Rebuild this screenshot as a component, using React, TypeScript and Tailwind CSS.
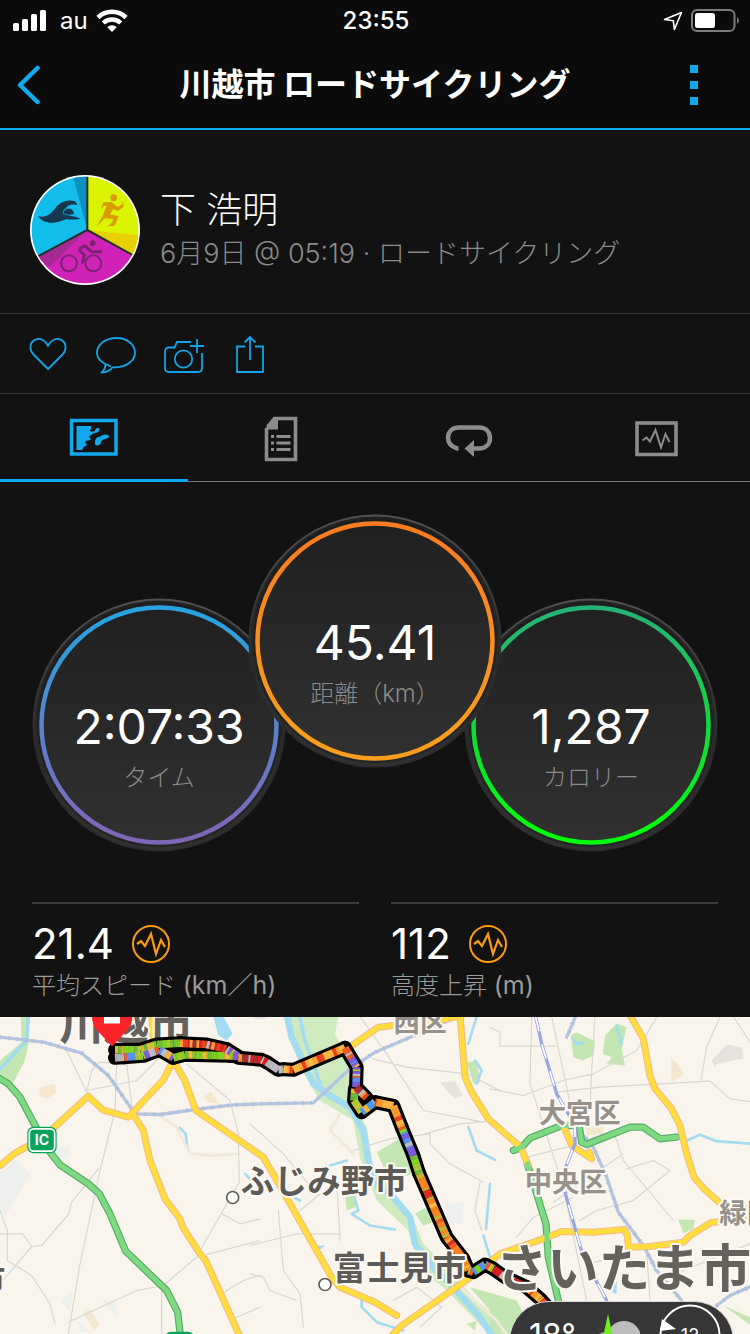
import type { ReactNode } from "react";

const pulse = "M2 12 L6 9 L10 14 L16 2 L21 22 L26 8 L30 15";

function StatusBar() {
  return (
    <div className="flex h-[41px] items-center justify-between pr-[10px] pl-3 text-white">
      <div className="flex flex-1 items-center">
        <svg width="34" height="22" viewBox="0 0 34 22" fill="#fff" aria-hidden="true">
          <rect x="1" y="13" width="6" height="8" rx="1.5" />
          <rect x="10" y="9" width="6" height="12" rx="1.5" />
          <rect x="19" y="4" width="6" height="17" rx="1.5" />
          <rect x="28" y="0" width="6" height="21" rx="1.5" />
        </svg>
        <span className="ml-[14px] text-2xl leading-8">au</span>
        <svg className="ml-2" width="32" height="24" viewBox="0 0 32 24" fill="none" stroke="#fff" aria-hidden="true">
          <path d="M2 8.5 A20 20 0 0 1 30 8.5" strokeWidth="4.6" />
          <path d="M7.3 14 A12.5 12.5 0 0 1 24.7 14" strokeWidth="4.4" />
          <path d="M16 23 L11.3 18.3 A6.6 6.6 0 0 1 20.7 18.3 Z" fill="#fff" stroke="none" />
        </svg>
      </div>
      <span className="text-2xl leading-8 font-medium">23:55</span>
      <div className="flex flex-1 items-center justify-end gap-2">
        <svg width="20" height="20" viewBox="0 0 20 20" fill="none" stroke="#fff" strokeWidth="1.6" strokeLinejoin="round" aria-hidden="true">
          <path d="M18.5 1.5 L1.5 8.5 L10.3 9.7 L11.4 18.5 Z" />
        </svg>
        <svg width="49" height="24" viewBox="0 0 49 24" aria-hidden="true">
          <rect x="1" y="1" width="42.5" height="21" rx="5" fill="none" stroke="#7c7c7c" strokeWidth="2" />
          <rect x="4" y="4" width="20" height="15" rx="2.5" fill="#fff" />
          <path d="M46 8 Q50 11.500 46 15 Z" fill="#7c7c7c" />
        </svg>
      </div>
    </div>
  );
}

function TitleBar() {
  return (
    <div className="flex h-[89px] items-center justify-between border-b-2 border-[#11a9ed] px-4">
      <button type="button" aria-label="戻る" className="flex w-16">
        <svg width="26" height="40" viewBox="0 0 26 40" fill="none" stroke="#11a9ed" strokeWidth="4.500" strokeLinecap="round" strokeLinejoin="round">
          <path d="M21.500 3 L4 20 L21.500 37" />
        </svg>
      </button>
      <h1 className="text-[32px] leading-10 font-bold text-white">川越市 ロードサイクリング</h1>
      <button type="button" aria-label="メニュー" className="flex w-16 justify-center">
        <span className="flex flex-col gap-2 pr-4">
          <span className="size-2 bg-[#11a9ed]" />
          <span className="size-2 bg-[#11a9ed]" />
          <span className="size-2 bg-[#11a9ed]" />
        </span>
      </button>
    </div>
  );
}

function Avatar() {
  return (
    <svg className="shrink-0" width="110" height="110" viewBox="0 0 330 330" aria-hidden="true">
      <defs>
        <clipPath id="disc">
          <circle cx="165" cy="165" r="160" />
        </clipPath>
      </defs>
      <circle cx="165" cy="165" r="165" fill="#fff" />
      <g clipPath="url(#disc)">
        <path d="M172 165 V0 H0 V255 Z" fill="#12bdec" />
        <path d="M172 165 V0 H128 Z" fill="#0f8fc0" />
        <path d="M172 165 V0 H330 V255 Z" fill="#d9f300" />
        <path d="M172 165 L330 182 V255 Z" fill="#e8d007" />
        <path d="M172 165 L0 258 V330 H330 V255 Z" fill="#d122b8" />
        <path d="M172 165 L20 246 L60 275 Z" fill="#a62a94" />
        <path d="M172 0 V165 L20 246 M172 165 L315 244" fill="none" stroke="#22302c" strokeWidth="6" />
        <path d="M24 123 Q50 132 72 104 Q95 70 133 78 Q140 83 142 90 Q120 84 108 98 L99 109 Q103 118 120 122 Q136 124 152 131 Q130 136 110 132 Q88 142 62 144 Q34 140 24 123 Z" fill="#133850" />
        <path d="M99 116 A17 17 0 1 1 133 118 Q116 124 99 116 Z" fill="#133850" stroke="#12bdec" strokeWidth="2" />
        <circle cx="251" cy="68" r="10" fill="#d99a08" />
        <path d="M220 82 L245 82 L262 96 L274 90 L279 80 L281 95 L264 108 L250 102 L240 118 L266 124 L254 152 L233 154 L247 142 L250 132 L224 130 L199 156 L218 122 L230 92 L222 92 L213 104 Z" fill="#d99a08" />
        <g fill="none" stroke="#7c2272" strokeWidth="6">
          <circle cx="117" cy="265" r="24" />
          <circle cx="190" cy="265" r="24" />
          <path d="M146 222 L165 213 L185 230 L216 230 M146 224 L163 240 L157 266" strokeWidth="9" />
        </g>
        <circle cx="188" cy="205" r="9" fill="#7c2272" />
      </g>
    </svg>
  );
}

function Profile() {
  return (
    <section className="flex h-[183px] items-center gap-5 px-[30px] pt-4 font-light">
      <Avatar />
      <div className="min-w-0">
        <p className="text-4xl leading-12 text-white">下 浩明</p>
        <p className="text-[27px] leading-10 text-[#8a8a8a]">6月9日 @ 05:19 · ロードサイクリング</p>
      </div>
    </section>
  );
}

function Action({ label, children, width }: { label: string; children: ReactNode; width: number }) {
  return (
    <button type="button" aria-label={label}>
      <svg width={width} height="40" viewBox={`0 0 ${width} 40`} fill="none" stroke="#14a3e6" strokeWidth="1.800">
        {children}
      </svg>
    </button>
  );
}

function Actions() {
  return (
    <section className="flex h-[81px] items-center gap-7 border-y border-[#3a3a3a] px-[29px]">
      <Action label="いいね" width={38}>
        <path d="M19 35 L4.500 20.500 C0 16 0.500 8 6 5.800 C11 3.500 16 6 19 12 C22 6 27 3.500 32 5.800 C37.500 8 38 16 33.500 20.500 Z" strokeLinejoin="round" />
      </Action>
      <Action label="コメント" width={41}>
        <path d="M16 32.500 C8 30 2 25 2 19 C2 10.500 10.500 4 21.500 4 C32 4 40 10.500 40 18.500 C40 27 31 33.300 21 33.300 L17.500 33.300 C15 37 11 38.500 6.500 38.500 C9 36.500 10.500 34 10.500 30" strokeLinejoin="round" />
      </Action>
      <Action label="写真を追加" width={43}>
        <path d="M27 8 H13 L10.500 13.500 H5 Q1 13.500 1 18 V34 Q1 38 5 38 H34 Q38 38 38 34 V19 M33 5 V19 M26 12 H40" />
        <circle cx="19.500" cy="25" r="8.700" />
      </Action>
      <Action label="共有" width={30}>
        <path d="M10 12.500 H2 V38 H28 V12.500 H20 M15 26 V3 M9.500 8.500 L15 3 L20.500 8.500" />
      </Action>
    </section>
  );
}

function Tab({ label, active, children }: { label: string; active?: boolean; children: ReactNode }) {
  return (
    <button
      type="button"
      role="tab"
      aria-label={label}
      aria-selected={Boolean(active)}
      className={
        active
          ? "flex h-22 flex-1 items-center justify-center border-b-3 border-[#11a9ed] text-[#11a9ed]"
          : "flex h-22 flex-1 items-center justify-center border-b border-[#757575] text-[#8c8c8c]"
      }
    >
      <svg width="50" height="48" viewBox="0 0 50 48" fill="none" stroke="currentColor" aria-hidden="true">
        {children}
      </svg>
    </button>
  );
}

function Tabs() {
  return (
    <div role="tablist" className="flex">
      <Tab label="マップ" active>
        <rect x="2.500" y="7.500" width="44.500" height="33.500" strokeWidth="3.500" />
        <path
          d="M7.500 13 H22 Q23 16 20.500 17.500 Q22 19.500 26 18 Q26 14.500 30 15 Q31.500 18 28 19.500 Q23 20.500 22 22.500 Q19 22.500 21 25 Q23 27 19 27.500 Q14 28 17.500 31 Q18.500 33 15 33.500 L13 37 H7.500 Z M26 31.500 Q25 24 31 23.500 Q35 20.500 39 22 Q42 24.500 36 26 Q32 26.500 31.500 31 Q29 33.500 26 31.500 Z"
          fill="currentColor"
          stroke="none"
        />
      </Tab>
      <Tab label="詳細">
        <path d="M11.500 13 L18.500 4.500 H39.500 V45.500 H10.500 V14" strokeWidth="3.600" />
        <path d="M9 15 L19 3 H22 V15.500 H9 Z" fill="currentColor" stroke="none" />
        <path d="M20.500 22.500 H34.500 M20.500 29 H34.500 M20.500 35.500 H34.500 M15 22.500 H18 M15 29 H18 M15 35.500 H18" strokeWidth="2.800" />
      </Tab>
      <Tab label="ラップ">
        <path d="M14.500 34.500 H13 C6 32 4 28 4 24 C4 17 9 13.500 15 13.500 H35 C42 13.500 46 18 46 24 C46 30 42 34.500 35 34.500 H27" strokeWidth="4.500" />
        <path d="M20.500 34.500 L30 26 V43 Z" fill="currentColor" stroke="none" />
      </Tab>
      <Tab label="グラフ">
        <rect x="6" y="9" width="39" height="31.500" strokeWidth="3.600" />
        <path d="M11.500 26.500 L15.500 23.500 L19 27.500 L24.500 16 L30 33.500 L34.500 20 L38.500 28" strokeWidth="2" />
      </Tab>
    </div>
  );
}

type GaugeProps = { id: string; value: string; label: string; from: string; to: string; className: string };

function Gauge({ id, value, label, from, to, className }: GaugeProps) {
  return (
    <div className={`relative size-[254px] shrink-0 ${className}`}>
      <svg className="absolute inset-0 size-full" viewBox="0 0 254 254" aria-hidden="true">
        <defs>
          <linearGradient id={`${id}-ring`} x1="0" y1="0" x2="0" y2="1">
            <stop offset="0.050" stopColor={from} />
            <stop offset="0.920" stopColor={to} />
          </linearGradient>
          <linearGradient id={`${id}-face`} x1="0" y1="0" x2="0" y2="1">
            <stop offset="0" stopColor="#202020" />
            <stop offset="1" stopColor="#313131" />
          </linearGradient>
          <linearGradient id={`${id}-rim`} x1="0" y1="0" x2="0" y2="1">
            <stop offset="0" stopColor="#505050" />
            <stop offset="0.550" stopColor="#2a2a2a" />
            <stop offset="1" stopColor="#2d2d2d" />
          </linearGradient>
        </defs>
        <circle cx="127" cy="127" r="125.500" fill={`url(#${id}-face)`} stroke={`url(#${id}-rim)`} strokeWidth="2" />
        <circle cx="127" cy="127" r="120" fill="none" stroke="#191919" strokeOpacity="0.500" strokeWidth="4" />
        <circle cx="127" cy="127" r="117.500" fill="none" stroke={`url(#${id}-ring)`} strokeWidth="4.500" />
      </svg>
      <div className="relative flex flex-col items-center pt-[99px]">
        <span className="text-5xl leading-15 text-white">{value}</span>
        <span className="text-2xl leading-[42px] font-light text-[#8a8a8a]">{label}</span>
      </div>
    </div>
  );
}

function Gauges() {
  return (
    <section className="flex items-start justify-center pt-8 pb-[50px]">
      <Gauge id="time" value="2:07:33" label="タイム" from="#29a3df" to="#7d68b8" className="mt-[84px]" />
      <Gauge id="distance" value="45.41" label="距離（km）" from="#f97d20" to="#f99e1c" className="z-10 -mx-[38px]" />
      <Gauge id="calories" value="1,287" label="カロリー" from="#24b474" to="#00fb0c" className="mt-[84px]" />
    </section>
  );
}

function Stat({ value, label, unit }: { value: string; label: string; unit: string }) {
  return (
    <div className="flex-1 border-t-2 border-[#3a3a3a] pt-[15px]">
      <div className="flex items-center gap-[18px]">
        <span className="text-[42px] leading-[50px] text-white">{value}</span>
        <svg width="38" height="38" viewBox="0 0 38 38" fill="none" stroke="#fb9b12" strokeWidth="2" aria-hidden="true">
          <circle cx="19" cy="19" r="18" />
          <path d={pulse} transform="translate(3 7)" strokeWidth="2.200" />
        </svg>
      </div>
      <p className="text-2xl leading-8 font-light text-[#9b9b9b]">
        {label} <span className="text-[25px] font-normal">{unit}</span>
      </p>
    </div>
  );
}

type Point = [number, number];

const route: { palette: string; points: Point[] }[] = [
  { palette: "gray", points: [[345, 142], [372, 140]] },
  { palette: "green", points: [[345, 118], [420, 118], [470, 102], [540, 98]] },
  { palette: "mixed", points: [[372, 140], [430, 136], [478, 118], [520, 142]] },
  { palette: "green", points: [[520, 142], [555, 133], [690, 136]] },
  { palette: "red", points: [[540, 98], [620, 102], [680, 116]] },
  { palette: "mixed", points: [[680, 116], [715, 138], [690, 136]] },
  { palette: "red", points: [[715, 142], [785, 148], [800, 155]] },
  { palette: "gray", points: [[800, 155], [835, 178], [850, 176]] },
  { palette: "orange", points: [[850, 176], [880, 178], [1035, 112]] },
  { palette: "mixed", points: [[1035, 112], [1070, 170], [1068, 230]] },
  { palette: "green", points: [[1065, 235], [1062, 270], [1085, 305]] },
  { palette: "red", points: [[1068, 230], [1100, 262]] },
  { palette: "blue", points: [[1085, 305], [1125, 275]] },
  { palette: "orange", points: [[1125, 275], [1180, 286], [1205, 350]] },
  { palette: "mixed", points: [[1205, 350], [1240, 435]] },
  { palette: "green", points: [[1240, 435], [1258, 490]] },
  { palette: "hot", points: [[1258, 490], [1340, 680], [1390, 745], [1405, 780]] },
  { palette: "mixed", points: [[1405, 780], [1420, 785], [1455, 762], [1480, 775]] },
  { palette: "red", points: [[1480, 775], [1515, 800], [1580, 830]] },
  { palette: "orange", points: [[1580, 830], [1620, 865], [1680, 930]] },
];

const palettes: Record<string, string[]> = {
  gray: ["#bdbdc2", "#bdbdc2", "#b3b3b8"],
  green: ["#7fd321", "#7fcb24", "#a9c93a", "#f9b43c", "#6dba3f", "#c2c43a"],
  mixed: ["#bdbdc2", "#f9b43c", "#5b8ff0", "#7fd321", "#ee5a24", "#7d5ae0", "#a9c93a"],
  red: ["#d91f1f", "#d91f1f", "#e8431f", "#f9a03c", "#bdbdc2", "#a93030"],
  orange: ["#fdbb45", "#fb9b2c", "#fdbb45", "#e8431f", "#fda63a", "#fdbb45"],
  blue: ["#5b8ff0", "#4a9df5", "#bdbdc2", "#f9b43c"],
  hot: ["#fb8424", "#fb8424", "#d9301f", "#fda63a", "#ee5a24", "#fb8424", "#c9b23a", "#fdbb45"],
};

function paceStripes() {
  const stripes: { x1: number; y1: number; x2: number; y2: number; color: string }[] = [];
  let seed = 17;
  const random = () => {
    seed = (seed * 16807) % 2147483647;
    return seed / 2147483647;
  };
  for (const { palette, points } of route) {
    const colors = palettes[palette];
    for (let i = 1; i < points.length; i++) {
      const [ax, ay] = points[i - 1];
      const [bx, by] = points[i];
      const length = Math.hypot(bx - ax, by - ay);
      let at = 0;
      while (at < length) {
        const end = Math.min(length, at + 4 + random() * 11);
        const a = at / length;
        const b = Math.min(1, (end + 1) / length);
        stripes.push({
          x1: ax + (bx - ax) * a,
          y1: ay + (by - ay) * a,
          x2: ax + (bx - ax) * b,
          y2: ay + (by - ay) * b,
          color: colors[Math.floor(random() * colors.length)],
        });
        at = end;
      }
    }
  }
  return stripes;
}

const yellowRoads = [
  "0,465 45,428 125,385 265,257 308,298 385,320 490,208 515,160",
  "400,312 430,360 450,450 495,565 540,625 548,650 600,730 617,750 640,800 717,972 725,990",
  "455,18 460,100 525,160 552,205 588,300 670,357 790,440 825,500 995,800 1020,830 1125,875 1190,915",
  "1165,985 1205,945 1405,805 1500,730 1635,683 1685,663 1780,665 1873,657 1882,675 1885,710 1950,708 2050,695 2070,675 2135,635 2260,628",
  "1050,110 1070,95 1135,50 1180,45 1310,32 1385,15",
  "1380,10 1395,200 1415,245 1465,325 1562,410 1585,465",
  "1888,10 1930,85 1950,195 1965,235 2015,295 2040,345 2060,430 2082,500 2112,535 2160,578 2260,600",
  "1690,345 1715,405 1775,445 1768,425",
];

const greenRoads = [
  "-5,202 25,220 60,260 108,350 150,425 180,463 265,520 298,550 330,610 377,722 500,840 533,905 543,990",
  "1540,420 1565,410 1590,383 1685,345 1712,345",
  "1738,350 1745,395 1760,402 1890,350 1930,350 1980,385 2030,380",
  "1582,460 1610,550 1638,640 1645,740 1675,870 1700,960",
];

const lightRails = [
  "0,80 130,95 245,128 325,195 405,310 480,312 600,295 700,283 780,280 940,277 1050,175 1125,125 1220,85 1310,45 1380,15",
  "1728,15 1700,80",
  "1725,345 1780,410 1820,500 1855,605 1930,705 1970,780 2045,870",
  "2150,885 2190,855 2260,825",
];

const smallRoads =
  "M200,120 L260,245 L275,180 L298,155 L380,160 L397,300 M350,160 L345,300 L300,480 L240,760 L205,972 M260,240 L410,210 L490,130 M560,160 L690,270 L715,370 L718,515 L600,720 M295,475 L215,575 L205,612 L125,705 L95,708 L0,820 M0,670 H68 L95,708 M0,600 L22,660 V750 L95,795 L150,880 L165,940 M205,935 L410,840 L490,825 L590,740 L780,690 M485,825 V972 M665,610 L720,640 L780,625 M665,850 L730,810 L780,795 M700,925 L780,890 M750,340 L850,430 L950,550 M900,600 L1010,510 L1020,690 M750,705 L890,670 L1020,670 M835,600 L850,780 L900,850 L910,950 M750,790 L790,800 L810,840 L890,870 M1080,18 L1160,130 L1270,300 L1450,335 M1120,145 L1220,170 L1400,190 L1500,240 M1060,420 L1170,385 L1290,370 L1290,400 L1350,460 L1450,515 M1275,370 L1380,340 L1480,330 M1440,515 L1425,600 L1445,660 M1180,870 L1250,830 L1325,890 L1260,950 M1470,50 L1500,65 V107 H1670 M1595,18 L1590,220 L1690,530 L1760,870 M1655,18 L1700,230 L1720,330 M1785,18 L1775,180 L1770,300 M1470,235 L1570,255 L1690,210 L1780,190 L1910,120 L1970,20 M1670,245 L1800,230 L2130,212 L2190,265 L2260,275 M2160,18 L2120,110 L2103,210 M2200,18 L2260,110 M1580,440 L1700,410 L1840,360 L1870,450 L2020,630 M1660,575 L1870,430 M1740,630 L1790,600 L1900,570 L2010,480 L1960,450 L1880,475 M1550,680 L1600,620 L1720,560 M1950,870 L1940,720 M1760,760 L1850,740 M2000,800 L2250,700";

function Place({ x, y, size, tone, children }: { x: number; y: number; size: number; tone: string; children: string }) {
  return (
    <text x={x} y={y} fontSize={size} fill={tone} stroke="#fbf8f2" strokeWidth="12" strokeLinejoin="round" paintOrder="stroke" fontWeight="700">
      {children}
    </text>
  );
}

function MapCanvas() {
  const line = { fill: "none", strokeLinejoin: "round" as const, strokeLinecap: "round" as const };
  return (
    <svg className="absolute inset-0 size-full" viewBox="0 18 2250 954" preserveAspectRatio="xMidYMid slice" role="img" aria-label="ルートマップ">
      <rect x="-500" y="-500" width="3500" height="2500" fill="#f9f5ed" />
      <g fill="#eef0ee">
        <path d="M0,480 L40,440 L92,490 L15,620 L0,600 Z M160,420 L205,405 L215,435 L175,445 Z M180,870 L220,840 L210,905 Z M305,865 L340,870 L355,915 L330,900 Z M1330,580 L1390,575 V640 H1345 Z M230,930 L270,965 H240 Z" />
      </g>
      <g fill="#e6e2de">
        <path d="M1320,215 L1365,212 L1388,255 L1365,265 L1340,240 Z M2135,150 L2180,102 L2225,110 L2230,145 L2150,160 L2145,168 Z M765,12 H795 V26 H765 Z" />
      </g>
      <g fill="#f3e7d0">
        <path d="M120,230 L165,220 L168,250 L140,265 L118,255 Z M610,260 L632,243 L660,280 L625,275 Z M248,905 L272,898 L300,945 L280,957 Z M2013,145 L2030,155 L2052,190 L2015,215 Z M1755,350 L1810,345 V370 L1760,375 Z" />
      </g>
      <g fill="#cfeabf">
        <path d="M855,18 H1015 L1005,70 L1060,180 L1050,255 L1100,350 L1120,470 L1190,560 L1240,625 L1270,700 L1330,760 L1420,860 L1500,930 V972 H1470 L1330,830 L1260,780 L1225,660 L1130,570 L1080,440 L1060,330 L960,270 L900,170 Z" />
      </g>
      <g fill="#c3e6b2">
        <path d="M62,18 H88 L85,100 L75,150 L38,220 L0,195 V150 L65,95 Z" />
        <path d="M1130,425 L1205,380 L1225,395 L1240,490 L1170,510 Z M1245,610 L1280,590 L1300,635 L1270,645 Z M1400,155 L1430,150 L1440,215 L1420,220 Z M1035,555 L1070,550 L1065,590 L1040,600 Z M1410,830 L1550,870 L1600,972 H1560 L1470,900 Z M1400,940 L1430,930 L1425,960 Z" />
        <path d="M1712,75 L1730,65 L1785,92 L1780,135 L1748,150 L1720,140 Z M1815,75 L1850,40 L1880,50 L1865,115 L1875,165 L1820,160 L1835,140 L1808,130 Z M2035,628 L2085,628 L2080,655 L2050,668 Z M2170,885 L2260,925 V950 Z M1470,890 L1545,870 L1560,972 H1470 Z" />
      </g>
      <g {...line} stroke="#a3dcf0">
        <path d="M860,10 L875,80 L940,220 L1000,262 L1050,290 L1090,360 L1105,450 L1130,520 L1180,560 L1230,620 L1245,700 L1290,760 L1360,830 L1440,920 L1480,980" strokeWidth="20" />
        <path d="M897,10 L915,90 L960,220" strokeWidth="11" />
        <path d="M85,18 L80,90 L0,175" strokeWidth="11" />
        <path d="M540,352 L557,370 L562,410 M1060,550 L1075,600 L1055,610 L1110,645 L1185,657 M1405,350 L1430,420 L1485,448 M1470,520 L1458,655 M1430,18 L1405,100 M1425,150 L1445,180 L1430,220 M1850,45 L1865,100 M1450,675 L1470,740 M990,465 L1040,450 M850,545 L900,570 M1085,870 V890 L1130,935 L1210,960 M2050,395 L2100,373 L2150,392 L2260,400 M735,490 L760,515" strokeWidth="8" />
      </g>
      <path d="M640,18 H670 L698,70 L680,90 L655,75 Z M1715,80 L1735,95 L1755,92 L1750,102 L1725,105 Z M945,705 H975 L965,715 H940 Z M1835,845 L1850,810 V850 Z" fill="#a3dcf0" />
      <path d="M480,315 L530,350 L570,430 L640,435 L715,430 M1020,310 L990,360 L1060,430 M1380,830 L1490,930 L1520,972" {...line} stroke="#efeadb" strokeWidth="9" />
      <path d={smallRoads} {...line} stroke="#d5d7d1" strokeWidth="3.500" />
      <g {...line}>
        {lightRails.map((points) => (
          <polyline key={points} points={points} stroke="#b4c5e0" strokeWidth="10" />
        ))}
        {lightRails.map((points) => (
          <polyline key={points} points={points} stroke="#a7bad9" strokeWidth="13" strokeDasharray="3 22" strokeLinecap="butt" />
        ))}
        {greenRoads.map((points) => (
          <polyline key={points} points={points} stroke="#56ad68" strokeWidth="22" />
        ))}
        {yellowRoads.map((points) => (
          <polyline key={points} points={points} stroke="#f3b989" strokeWidth="21" />
        ))}
        {yellowRoads.map((points) => (
          <polyline key={points} points={points} stroke="#ffdd3d" strokeWidth="15" />
        ))}
        {greenRoads.map((points) => (
          <polyline key={points} points={points} stroke="#7fd982" strokeWidth="15" />
        ))}
        <path d="M1607,18 L1625,100 L1670,250 L1725,345 L1725,400 L1695,475 L1695,545 L1730,670 L1750,740 L1820,870" stroke="#9aa6e3" strokeWidth="10" />
        <path d="M1607,18 L1625,100 L1670,250 L1725,345 L1725,400 L1695,475 L1695,545 L1730,670 L1750,740 L1820,870" stroke="#fff" strokeWidth="5" strokeDasharray="45 40" strokeLinecap="butt" />
      </g>
      <g fill="#fff" stroke="#5d5b57" strokeWidth="5">
        <circle cx="698" cy="561" r="18" />
        <circle cx="975" cy="822" r="18" />
      </g>
      <g>
        <rect x="82" y="349" width="88" height="79" rx="18" fill="#0aa35c" />
        <rect x="88" y="355" width="76" height="67" rx="13" fill="none" stroke="#fff" strokeWidth="5" />
        <text x="126" y="404" fontSize="42" fontWeight="700" textAnchor="middle" fill="#fff">
          IC
        </text>
        <rect x="495" y="964" width="88" height="79" rx="18" fill="#0aa35c" />
      </g>
      <Place x={178} y={88} size={134} tone="#65625d">川越市</Place>
      <Place x={1180} y={63} size={80} tone="#96918a">西区</Place>
      <Place x={1616} y={337} size={82} tone="#96918a">大宮区</Place>
      <Place x={1574} y={543} size={82} tone="#96918a">中央区</Place>
      <Place x={2158} y={638} size={82} tone="#96918a">緑区</Place>
      <Place x={-82} y={843} size={98} tone="#5d5b57">市</Place>
      <g {...line} stroke="#000" strokeWidth="42">
        {route.map(({ points }, index) => (
          <polyline key={index} points={points.map((point) => point.join(",")).join(" ")} />
        ))}
      </g>
      <g strokeWidth="23">
        {paceStripes().map((stripe, index) => (
          <line key={index} x1={stripe.x1} y1={stripe.y1} x2={stripe.x2} y2={stripe.y2} stroke={stripe.color} />
        ))}
      </g>
      <Place x={722} y={547} size={100} tone="#5d5b57">ふじみ野市</Place>
      <Place x={998} y={808} size={100} tone="#5d5b57">富士見市</Place>
      <Place x={1488} y={830} size={154} tone="#65625d">さいたま市</Place>
      <path d="M336,108 L290,58 Q276,40 276,18 V0 H397 V18 Q397,40 383,58 Z" fill="#fb2328" />
      <rect x="312" y="0" width="48" height="39" fill="#fff" />
    </svg>
  );
}

function WeatherBadge() {
  return (
    <div className="absolute right-4 bottom-[-47px] flex h-20 w-[225px] items-start justify-between rounded-[44px] border border-[#d8d8d8] bg-[#363636] pt-[2px] pr-3 pl-[19px] text-white">
      <span className="pt-[14px] text-[32px] leading-9">18°</span>
      <svg width="46" height="60" viewBox="0 0 46 60" aria-hidden="true">
        <circle cx="30" cy="34" r="17" fill="#bdbdbd" />
        <circle cx="12" cy="42" r="14" fill="#9c9c9c" />
        <path d="M14 10 L21 42 L13 60 L7 42 Z" fill="#6fee1c" />
      </svg>
      <div className="relative flex size-[62px] items-start justify-center">
        <svg className="absolute inset-0 size-full" viewBox="0 0 62 62" fill="none" aria-hidden="true">
          <circle cx="31" cy="31" r="29.500" stroke="#fff" strokeWidth="2" />
          <path d="M3 15 L17 25 L1 27 Z" fill="#fff" />
        </svg>
        <span className="relative pt-[20px] text-lg leading-6">12</span>
      </div>
    </div>
  );
}

export default function App() {
  return (
    <div className="flex min-h-screen flex-col bg-[#121212] font-[Inter,'Noto_Sans_CJK_JP',sans-serif]">
      <header className="bg-[#0b0b0b]">
        <StatusBar />
        <TitleBar />
      </header>
      <main className="flex flex-1 flex-col">
        <Profile />
        <Actions />
        <Tabs />
        <Gauges />
        <section className="flex gap-8 px-8 pb-[15px]">
          <Stat value="21.4" label="平均スピード" unit="(km／h)" />
          <Stat value="112" label="高度上昇" unit="(m)" />
        </section>
        <section className="relative min-h-72 flex-1 overflow-hidden">
          <MapCanvas />
          <WeatherBadge />
        </section>
      </main>
    </div>
  );
}
